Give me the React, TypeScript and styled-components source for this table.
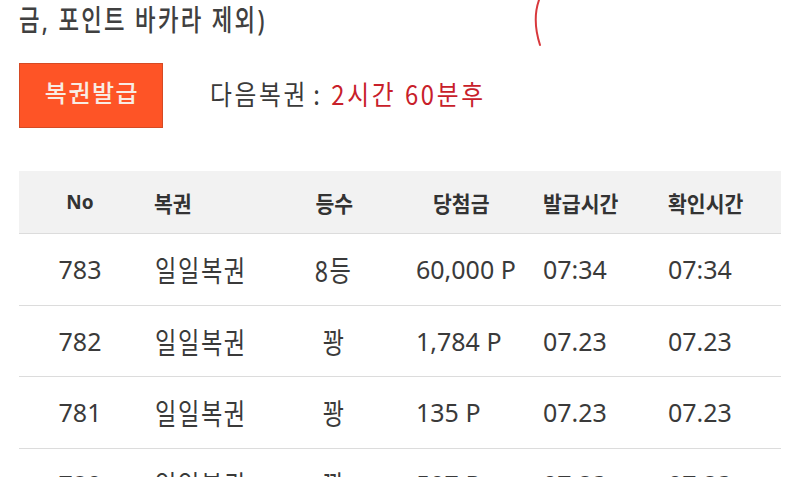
import React from "react";
import styled, { createGlobalStyle } from "styled-components";

const Global = createGlobalStyle`
  html, body { margin: 0; padding: 0; background: #fff; }
  body { font-family: "Noto Sans", "Noto Sans CJK KR", sans-serif; color: #333; }
`;

const Page = styled.div`
  position: relative;
  width: 800px;
  height: 477px;
  overflow: hidden;
  padding: 0 19px;
  box-sizing: border-box;
`;

/* Condensed Korean type: the source font is narrower than Noto Sans CJK */
const Condensed = styled.span<{
  $size: number;
  $scale: number;
  $ls?: number;
  $ws?: number;
  $origin?: string;
  $weight?: number;
  $cjkFirst?: boolean;
}>`
  display: inline-block;
  font-family: ${(p) =>
    p.$cjkFirst ? `"Noto Sans CJK KR", sans-serif` : `"Noto Sans", "Noto Sans CJK KR", sans-serif`};
  font-size: ${(p) => p.$size}px;
  font-weight: ${(p) => p.$weight ?? "inherit"};
  letter-spacing: ${(p) => p.$ls ?? 0}px;
  word-spacing: ${(p) => p.$ws ?? 0}px;
  transform: scaleX(${(p) => p.$scale});
  transform-origin: ${(p) => p.$origin ?? "left"} center;
  white-space: nowrap;
`;

const Notice = styled.div`
  height: 44px;
  line-height: 40px;
  color: #404040;
`;

const ActionRow = styled.div`
  display: flex;
  align-items: center;
  margin-top: 19px;
`;

const IssueButton = styled.button`
  width: 144px;
  height: 65px;
  box-sizing: border-box;
  background: #fe5426;
  border: 1px solid #d54a24;
  color: #f8ece4;
  font-family: "Noto Sans CJK KR", sans-serif;
  font-size: 24px;
  font-weight: 500;
  letter-spacing: 1.5px;
  padding: 0 0 9px 2px;
  cursor: pointer;
`;

const NextInfo = styled.div`
  margin-left: 47px;
  color: #3a3a3a;
  padding-bottom: 4px;
`;

const Colon = styled.span`
  margin: 0 10px 0 6px;
`;

const Red = styled.span`
  color: #c8202a;
`;

const Table = styled.div`
  margin-top: 43px;
  width: 762px;
`;

const Row = styled.div<{ $head?: boolean }>`
  display: grid;
  grid-template-columns: 122px 150px 86px 155px 125px 1fr;
  align-items: center;
  height: ${(p) => (p.$head ? "62px" : "70.5px")};
  background: ${(p) => (p.$head ? "#f2f2f2" : "#fff")};
  border-bottom: 1px solid #dcdcdc;
  font-size: ${(p) => (p.$head ? "19px" : "25px")};
  font-weight: ${(p) => (p.$head ? 700 : 400)};
  color: ${(p) => (p.$head ? "#333" : "#3a3a3a")};
  white-space: nowrap;
`;

const Cell = styled.div<{ $align?: "left" | "center"; $pl?: number }>`
  text-align: ${(p) => p.$align ?? "left"};
  padding-left: ${(p) => p.$pl ?? 0}px;
`;

const Arc = styled.svg`
  position: absolute;
  left: 525px;
  top: 0;
`;

type Item = {
  no: string;
  name: string;
  rank: string;
  prize: string;
  issued: string;
  checked: string;
};

const items: Item[] = [
  { no: "783", name: "일일복권", rank: "8등", prize: "60,000 P", issued: "07:34", checked: "07:34" },
  { no: "782", name: "일일복권", rank: "꽝", prize: "1,784 P", issued: "07.23", checked: "07.23" },
  { no: "781", name: "일일복권", rank: "꽝", prize: "135 P", issued: "07.23", checked: "07.23" },
  { no: "780", name: "일일복권", rank: "꽝", prize: "507 P", issued: "07.23", checked: "07.23" },
];

const HeadKo = ({ children, origin }: { children: React.ReactNode; origin?: string }) => (
  <Condensed $size={22} $scale={0.93} $origin={origin}>
    {children}
  </Condensed>
);

const CellKo = ({ children, origin }: { children: React.ReactNode; origin?: string }) => (
  <Condensed $size={29} $scale={0.8} $ls={2} $weight={400} $origin={origin}>
    {children}
  </Condensed>
);

export default function App() {
  return (
    <>
      <Global />
      <Page>
        <Notice>
          <Condensed $size={29} $scale={0.77} $ls={3} $weight={500}>
            금, 포인트 바카라 제외)
          </Condensed>
        </Notice>
        <ActionRow>
          <IssueButton>복권발급</IssueButton>
          <NextInfo>
            <Condensed $size={27} $scale={0.88} $ls={3} $ws={1} $weight={400} $cjkFirst>
              다음복권<Colon>:</Colon>
              <Red>2시간 60분후</Red>
            </Condensed>
          </NextInfo>
        </ActionRow>
        <Table>
          <Row $head>
            <Cell $align="center">No</Cell>
            <Cell $pl={13}>
              <HeadKo>복권</HeadKo>
            </Cell>
            <Cell $align="center">
              <HeadKo origin="center">등수</HeadKo>
            </Cell>
            <Cell $pl={56}>
              <HeadKo>당첨금</HeadKo>
            </Cell>
            <Cell $pl={11}>
              <HeadKo>발급시간</HeadKo>
            </Cell>
            <Cell $pl={11}>
              <HeadKo>확인시간</HeadKo>
            </Cell>
          </Row>
          {items.map((it) => (
            <Row key={it.no}>
              <Cell $align="center">{it.no}</Cell>
              <Cell $pl={14}>
                <CellKo>{it.name}</CellKo>
              </Cell>
              <Cell $align="center">
                <CellKo origin="center">{it.rank}</CellKo>
              </Cell>
              <Cell $pl={39}>{it.prize}</Cell>
              <Cell $pl={11}>{it.issued}</Cell>
              <Cell $pl={11}>{it.checked}</Cell>
            </Row>
          ))}
        </Table>
        <Arc width="30" height="50" viewBox="0 0 30 50">
          <path d="M14 0 Q7 20 15 45" fill="none" stroke="#d8383c" strokeWidth="2" strokeLinecap="round" />
        </Arc>
      </Page>
    </>
  );
}
